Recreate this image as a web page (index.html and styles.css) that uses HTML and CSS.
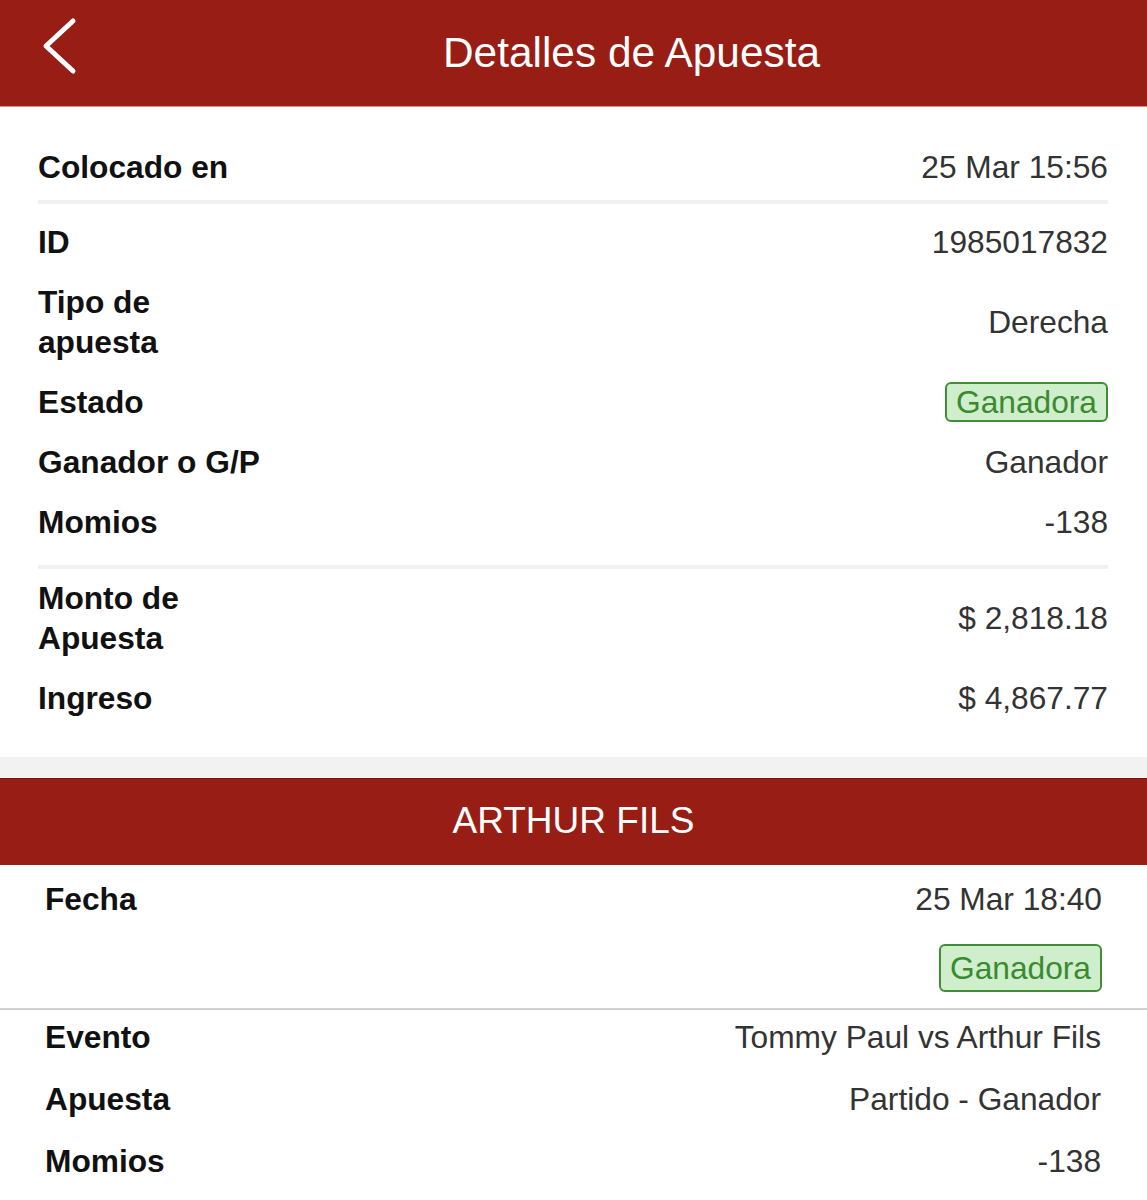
FILE: index.html
```html
<!DOCTYPE html>
<html lang="es">
<head>
    <meta charset="UTF-8">
    <meta name="viewport" content="width=device-width, initial-scale=1.0">
    <title>Detalles de Apuesta</title>
    <link rel="stylesheet" href="styles.css">
</head>
<body>

    <header class="topbar">
        <a class="back-button" href="#">
            <svg width="40" height="60" viewBox="0 0 40 60">
                <polyline points="31,5 4,30 31,55" fill="none" stroke="#fff" stroke-width="5" stroke-linecap="round" stroke-linejoin="round"/>
            </svg>
        </a>
        <h1 class="topbar-title">Detalles de Apuesta</h1>
    </header>

    <section class="bet-summary">
        <div class="row">
            <span class="label">Colocado en</span>
            <span class="value">25 Mar 15:56</span>
        </div>
        <div class="separator first"></div>
        <div class="row">
            <span class="label">ID</span>
            <span class="value">1985017832</span>
        </div>
        <div class="row">
            <span class="label">Tipo de<br>apuesta</span>
            <span class="value">Derecha</span>
        </div>
        <div class="row">
            <span class="label">Estado</span>
            <span class="badge">Ganadora</span>
        </div>
        <div class="row">
            <span class="label">Ganador o G/P</span>
            <span class="value">Ganador</span>
        </div>
        <div class="row">
            <span class="label">Momios</span>
            <span class="value">-138</span>
        </div>
        <div class="separator second"></div>
        <div class="row">
            <span class="label">Monto de<br>Apuesta</span>
            <span class="value">$ 2,818.18</span>
        </div>
        <div class="row">
            <span class="label">Ingreso</span>
            <span class="value">$ 4,867.77</span>
        </div>
    </section>

    <div class="spacer"></div>

    <div class="selection-title">ARTHUR FILS</div>

    <section class="selection">
        <div class="selection-head">
            <div class="row">
                <span class="label">Fecha</span>
                <span class="value">25 Mar 18:40</span>
            </div>
            <div class="badge-row">
                <span class="badge big">Ganadora</span>
            </div>
        </div>
        <div class="selection-body">
            <div class="row wide">
                <span class="label">Evento</span>
                <span class="value">Tommy Paul vs Arthur Fils</span>
            </div>
            <div class="row wide">
                <span class="label">Apuesta</span>
                <span class="value">Partido - Ganador</span>
            </div>
            <div class="row wide">
                <span class="label">Momios</span>
                <span class="value">-138</span>
            </div>
        </div>
    </section>

</body>
</html>
```

FILE: styles.css
```css
body {
    margin: 0;
    font-family: "Liberation Sans", Arial, sans-serif;
    font-size: 31.7px;
    background-color: #fff;
    color: #111;
}

.topbar {
    display: flex;
    align-items: center;
    height: 106px;
    background-color: #981d15;
    border-bottom: 1px solid #d98f88;
}

.back-button {
    display: flex;
    width: 118px;
    padding-left: 42px;
    box-sizing: border-box;
    margin-top: -14px;
}

.topbar-title {
    flex: 1;
    margin: 0;
    text-align: center;
    color: #fff;
    font-size: 42.4px;
    font-weight: normal;
    padding-right: 2px;
}

.bet-summary {
    padding: 30px 39px 29px 38px;
}

.row {
    display: flex;
    justify-content: space-between;
    align-items: center;
    padding: 10px 0;
    line-height: 40px;
}

.label {
    font-weight: bold;
    color: #111;
}

.value {
    color: #333;
}

.separator {
    height: 4px;
    background-color: #f0f0f0;
}

.separator.first {
    margin: 3px 0 8px;
}

.separator.second {
    margin: 13px 0 -1px;
}

.badge {
    display: inline-block;
    line-height: 36px;
    padding: 0 9px;
    border: 2px solid #408c37;
    border-radius: 6px;
    background-color: #cfeecb;
    color: #3a8a30;
}

.badge.big {
    line-height: 44px;
}

.spacer {
    height: 20px;
    background-color: #f2f2f2;
    border-bottom: 1px solid #fff;
}

.selection-title {
    height: 86px;
    line-height: 84px;
    background-color: #981d15;
    border-top: 1px solid #7a120c;
    color: #fff;
    text-align: center;
    font-size: 37px;
}

.selection-head {
    padding: 4px 45px 16px 45px;
    border-bottom: 2px solid #d0d0d0;
}

.badge-row {
    display: flex;
    justify-content: flex-end;
    margin-top: 15px;
}

.selection-body {
    padding: 0 46px 0 45px;
}

.row.wide {
    padding: 11px 0;
}

.selection-body .row.wide:first-child {
    padding-top: 7px;
}
```
